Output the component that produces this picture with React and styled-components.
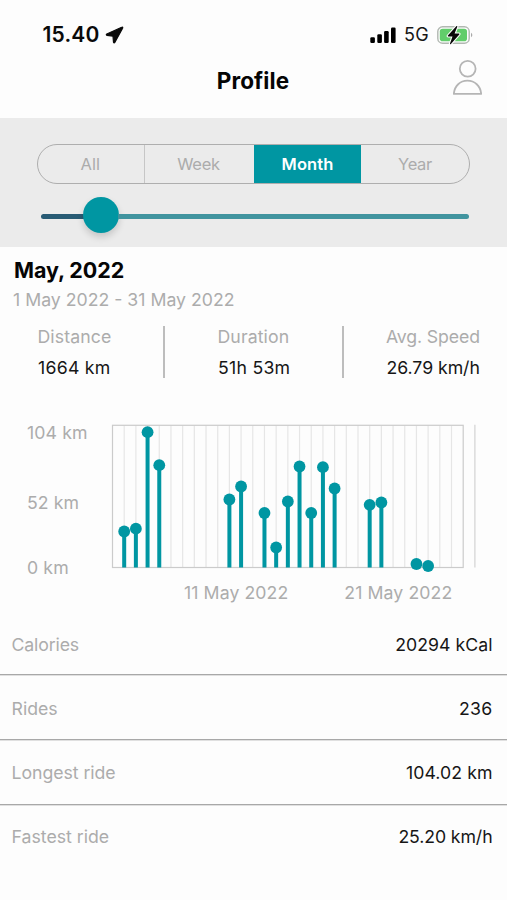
import React from 'react';
import styled, { createGlobalStyle } from 'styled-components';

const teal = '#0096a2';
const muted = '#acacac';
const ink = '#161616';

const GlobalStyle = createGlobalStyle`
  * { box-sizing: border-box; }
  body {
    margin: 0;
    background: #fdfdfd;
    font-family: Inter, "Liberation Sans", sans-serif;
    color: ${ink};
  }
`;

const Screen = styled.main`
  display: flex;
  flex-direction: column;
  width: 507px;
  height: 900px;
  overflow: hidden;
  background: #fdfdfd;
`;

const StatusBar = styled.div`
  display: flex;
  align-items: center;
  justify-content: space-between;
  height: 56px;
  padding: 14px 34px 0 42.5px;
`;

const Clock = styled.div`
  display: flex;
  align-items: center;
  gap: 5.5px;
  font-size: 21px;
  font-weight: 600;
  letter-spacing: 0.19px;
  line-height: 42px;
  color: #0a0a0a;
`;

const Indicators = styled.div`
  display: flex;
  align-items: center;
`;

const Network = styled.span`
  margin: 0 8px 0 7px;
  font-size: 18px;
  letter-spacing: 0.3px;
  line-height: 42px;
`;

const Header = styled.header`
  display: grid;
  grid-template-columns: 1fr auto 1fr;
  height: 62px;
  padding: 0 24px 0 23px;
`;

const Title = styled.h1`
  grid-column: 2;
  margin: 0;
  font-size: 22.5px;
  font-weight: 700;
  letter-spacing: 0.11px;
  line-height: 50px;
  color: #050505;
`;

const ProfileButton = styled.button`
  justify-self: end;
  align-self: start;
  display: block;
  margin-top: 3px;
  padding: 0;
  border: 0;
  background: none;

  svg { display: block; }
`;

const FilterPanel = styled.section`
  height: 129px;
  padding: 26px 37px 0;
  background: #ebebeb;
`;

const Segments = styled.div`
  display: grid;
  grid-template-columns: 106px 110px 107px 1fr;
  height: 40px;
  overflow: hidden;
  border: 1.5px solid #aeaeae;
  border-radius: 20px;
`;

const Segment = styled.button`
  padding: 0 ${(p) => p.$shift || 0}px 0 0;
  border: 0;
  border-left: ${(p) => (p.$divided ? '1px solid #c6c6c6' : '0')};
  background: ${(p) => (p.$active ? teal : 'transparent')};
  font-family: inherit;
  font-size: 16.5px;
  font-weight: ${(p) => (p.$active ? 600 : 400)};
  line-height: 38px;
  letter-spacing: ${(p) => p.$track}px;
  color: ${(p) => (p.$active ? '#fff' : muted)};
`;

const Slider = styled.div`
  display: flex;
  align-items: center;
  height: 36px;
  margin: 13px 1px 0 3.5px;
`;

const Track = styled.div`
  flex: ${(p) => (p.$done ? '0 0 44.5px' : '1')};
  height: 5px;
  margin-top: 2px;
  border-radius: ${(p) => (p.$done ? '3px 0 0 3px' : '0 3px 3px 0')};
  background: ${(p) => (p.$done ? '#285b74' : '#41949f')};
`;

const Thumb = styled.div`
  flex: none;
  width: 36px;
  height: 36px;
  margin: 0 -1px 0 -2px;
  border-radius: 50%;
  background: ${teal};
  box-shadow: 0 4px 7px rgba(0, 0, 0, 0.16);
`;

const Summary = styled.section`
  height: 134px;
  padding: 8px 0 0;
`;

const Period = styled.h2`
  margin: 0 0 0 14px;
  font-size: 21.5px;
  font-weight: 700;
  letter-spacing: -0.1px;
  line-height: 31px;
  color: #050505;
`;

const DateRange = styled.div`
  margin-left: 13px;
  font-size: 17.7px;
  line-height: 28px;
  color: ${muted};
`;

const Stats = styled.div`
  display: grid;
  grid-template-columns: 165px 179px 1fr;
  grid-template-rows: 52px;
  margin-top: 12px;
`;

const Stat = styled.div`
  padding: 0 0 0 ${(p) => p.$inset}px;
  border-right: ${(p) => (p.$divided ? '2px solid #bdbdbd' : '0')};
`;

const StatText = styled.div`
  height: ${(p) => (p.$value ? 30 : 22)}px;
  margin-left: ${(p) => (p.$value ? 0.5 : 0)}px;
  font-size: 17.7px;
  line-height: ${(p) => (p.$value ? 39 : 22)}px;
  letter-spacing: ${(p) => p.$track}px;
  white-space: nowrap;
  color: ${(p) => (p.$value ? ink : muted)};
`;

const ChartSection = styled.section`
  display: grid;
  grid-template-columns: 111px 1fr;
  grid-template-rows: 160px 38px;
  height: 234px;
  padding-top: 34px;
`;

const YAxis = styled.div`
  display: flex;
  flex-direction: column;
  padding-left: 27px;
`;

const YLabel = styled.div`
  height: ${(p) => p.$height}px;
  font-size: 17.7px;
  line-height: 35px;
  letter-spacing: 0.1px;
  color: ${muted};
`;

const Plot = styled.svg`
  display: block;
`;

const XAxis = styled.div`
  grid-column: 2;
  display: flex;
  gap: 56px;
  padding-left: 73px;
  font-size: 17.7px;
  line-height: 36px;
  letter-spacing: 0.08px;
  white-space: nowrap;
  color: ${muted};
`;

const Details = styled.dl`
  display: grid;
  grid-template-rows: 60px 65px 65px 65px;
  margin: 0;
`;

const DetailRow = styled.div`
  display: flex;
  align-items: center;
  justify-content: space-between;
  padding: ${(p) => p.$drop}px 14.5px ${(p) => (p.$last ? 2 : 0)}px 11.5px;
  border-bottom: ${(p) => (p.$last ? '0' : '1px solid #a8a8a8')};
  box-shadow: ${(p) => (p.$last ? 'none' : '0 1px 0 #e0e0e0')};
`;

const DetailLabel = styled.dt`
  font-size: 17.7px;
  line-height: 22px;
  letter-spacing: ${(p) => p.$track}px;
  color: ${muted};
`;

const DetailValue = styled.dd`
  margin: 0;
  font-size: 17.7px;
  line-height: 22px;
  letter-spacing: ${(p) => p.$track}px;
`;

const LocationArrow = () => (
  <svg width="19" height="18" viewBox="0 0 19 18">
    <path
      d="M16.700 1.200 1.800 8c-.7.4-.6 1.100.2 1.300L8 10.200 8.500 16.200c.1.800.9.9 1.300.2L17.600 2.200C18 1.300 17.500.8 16.700 1.200Z"
      fill="#0a0a0a"
      stroke="#0a0a0a"
      strokeWidth="1.2"
      strokeLinejoin="round"
    />
  </svg>
);

const SignalIcon = () => (
  <svg width="27" height="17" viewBox="0 0 27 17">
    <rect x="0.3" y="10.2" width="4.6" height="5.8" rx="1.2" />
    <rect x="7.3" y="7.3" width="4.6" height="8.7" rx="1.2" />
    <rect x="14.1" y="4" width="4.6" height="12" rx="1.2" />
    <rect x="21" y="0.5" width="4.6" height="15.5" rx="1.2" />
  </svg>
);

const BatteryIcon = () => (
  <svg width="36" height="20" viewBox="0 0 36 20">
    <rect x="0.8" y="1.8" width="31.4" height="16.4" rx="4.8" fill="#fdfdfd" stroke="#b1b8b1" strokeWidth="1.4" />
    <rect x="2.8" y="3.8" width="27.2" height="12.4" rx="2.8" fill="#62cd6b" />
    <path d="M34 7.8c1.8.7 1.8 3.7 0 4.4Z" fill="#a9a9a9" />
    <path
      d="M19.3 1.2 10.9 10.6q-.5.8.4.8h4.2l-2.5 7.2c-.2.8.5 1 .9.4l8.4-9.6q.5-.8-.4-.8h-4.3l2.7-6.9c.3-.8-.5-1.1-1-.5Z"
      fill="#080808"
      stroke="#fdfdfd"
      strokeWidth="2.2"
      paintOrder="stroke"
    />
  </svg>
);

const PersonIcon = () => (
  <svg width="31" height="37" viewBox="0 0 31 37" fill="none" stroke="#b5b5b5" strokeWidth="1.8">
    <circle cx="15.7" cy="9.8" r="7.9" />
    <path d="M1.9 34.9v-.7C2.7 27 8 21.7 15.4 21.7S28.300 27 29.100 34.200v.7Z" strokeLinejoin="round" />
  </svg>
);

const DAY_STEP = 11.69;
const LEFT = 1.5;
const TOP = 10.3;
const BASE = 152.5;
const rides = [
  [1, 116.5], [2, 113.7], [3, 17.2], [4, 50.2], [10, 84.5], [11, 71.5],
  [13, 98], [14, 132.5], [15, 86.5], [16, 51.5], [17, 98], [18, 52.2],
  [19, 73.5], [22, 89.8], [23, 87.5], [26, 149], [27, 151],
];
const dayX = (day) => LEFT + day * DAY_STEP;

const RideChart = () => (
  <Plot width="396" height="160" viewBox="0 0 396 160">
    {Array.from({ length: 29 }, (_, i) => (
      <line key={i} x1={dayX(i + 1)} x2={dayX(i + 1)} y1={TOP} y2={BASE} stroke="#e6e6e6" strokeWidth="1.2" />
    ))}
    <rect x={LEFT} y={TOP} width={DAY_STEP * 30} height={BASE - TOP} fill="none" stroke="#cbcbcb" strokeWidth="1.2" />
    <line x1={dayX(31)} x2={dayX(31)} y1={TOP - 0.5} y2={BASE} stroke="#d2d2d2" strokeWidth="1.2" />
    {rides.map(([day, y]) => (
      <g key={day} fill={teal}>
        {y < BASE - 5 && <rect x={dayX(day) - 2} y={y} width="4" height={BASE - y} />}
        <circle cx={dayX(day)} cy={y} r="5.9" />
      </g>
    ))}
  </Plot>
);

const segments = [
  { label: 'All', track: 0.06, shift: 1.5 },
  { label: 'Week', track: -0.25, divided: true, shift: 2 },
  { label: 'Month', track: 0.1, active: true },
  { label: 'Year', track: -0.35 },
];

const stats = [
  { label: 'Distance', value: '1664 km', inset: 37.5, lt: 0.1, vt: 0.26, divided: true },
  { label: 'Duration', value: '51h 53m', inset: 52.5, lt: 0.1, vt: 0.25, divided: true },
  { label: 'Avg. Speed', value: '26.79 km/h', inset: 42, lt: -0.13, vt: -0.05 },
];

const details = [
  { label: 'Calories', value: '20294 kCal', lt: -0.13, vt: 0.03, drop: 0 },
  { label: 'Rides', value: '236', lt: 0, vt: 0.3, drop: 3 },
  { label: 'Longest ride', value: '104.02 km', lt: -0.05, vt: 0.07, drop: 1 },
  { label: 'Fastest ride', value: '25.20 km/h', lt: 0, vt: -0.1, drop: 0 },
];

export default function App() {
  return (
    <Screen>
      <GlobalStyle />
      <StatusBar>
        <Clock>
          15.40
          <LocationArrow />
        </Clock>
        <Indicators>
          <SignalIcon />
          <Network>5G</Network>
          <BatteryIcon />
        </Indicators>
      </StatusBar>
      <Header>
        <Title>Profile</Title>
        <ProfileButton aria-label="Account">
          <PersonIcon />
        </ProfileButton>
      </Header>
      <FilterPanel>
        <Segments>
          {segments.map((s) => (
            <Segment key={s.label} $track={s.track} $shift={s.shift} $active={s.active} $divided={s.divided}>
              {s.label}
            </Segment>
          ))}
        </Segments>
        <Slider>
          <Track $done />
          <Thumb />
          <Track />
        </Slider>
      </FilterPanel>
      <Summary>
        <Period>May, 2022</Period>
        <DateRange>1 May 2022 - 31 May 2022</DateRange>
        <Stats>
          {stats.map((s) => (
            <Stat key={s.label} $inset={s.inset} $divided={s.divided}>
              <StatText $track={s.lt}>{s.label}</StatText>
              <StatText $value $track={s.vt}>{s.value}</StatText>
            </Stat>
          ))}
        </Stats>
      </Summary>
      <ChartSection>
        <YAxis>
          <YLabel $height={70}>104 km</YLabel>
          <YLabel $height={65}>52 km</YLabel>
          <YLabel $height={25}>0 km</YLabel>
        </YAxis>
        <RideChart />
        <XAxis>
          <span>11 May 2022</span>
          <span>21 May 2022</span>
        </XAxis>
      </ChartSection>
      <Details>
        {details.map((d, i) => (
          <DetailRow key={d.label} $drop={d.drop} $last={i === details.length - 1}>
            <DetailLabel $track={d.lt}>{d.label}</DetailLabel>
            <DetailValue $track={d.vt}>{d.value}</DetailValue>
          </DetailRow>
        ))}
      </Details>
    </Screen>
  );
}
